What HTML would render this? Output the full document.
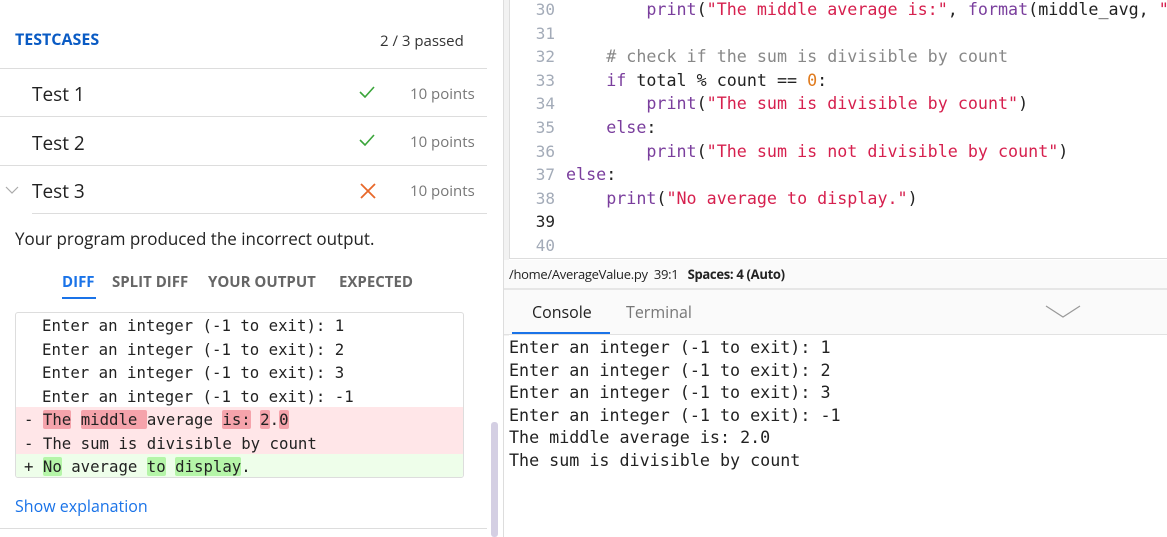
<!DOCTYPE html>
<html><head><style>
*{margin:0;padding:0;box-sizing:border-box}
body{width:1167px;height:537px;overflow:hidden;background:#fff;font-family:"Open Sans","Liberation Sans",sans-serif;position:relative;color:#222}
.a{position:absolute;white-space:pre}
.m{font-family:"DejaVu Sans Mono","Liberation Mono",monospace;font-size:15.7px}
.e{font-size:16.7px}
.hl{position:absolute;height:1px;background:#ddd}
.ln{color:#a3abb8;text-align:right;width:30px}
.k{color:#7a3e9d}.s{color:#d6204e}.c{color:#888}.n{color:#e07b1e}
.rd{background:#f5a3ab;border-radius:2px}
.gr{background:#b5f5a8;border-radius:2px}
</style></head><body>
<div class="a" style="left:15px;top:28px;font-size:16px;font-weight:bold;color:#0a5bc4">TESTCASES</div>
<div class="a" style="left:380px;top:31px;font-size:15px;color:#333">2 / 3 passed</div>
<div class="hl" style="left:0;top:68px;width:487px"></div>
<div class="a" style="left:32px;top:81px;font-size:19px">Test 1</div>
<svg class="a" style="left:359px;top:86px" width="16" height="12"><path d="M1 6L6 11L15 1" stroke="#3aa53a" fill="none" stroke-width="1.6"/></svg>
<div class="a" style="left:410px;top:84px;font-size:15px;color:#777">10 points</div>
<div class="hl" style="left:0;top:116px;width:487px"></div>
<div class="a" style="left:32px;top:130px;font-size:19px">Test 2</div>
<svg class="a" style="left:359px;top:134px" width="16" height="12"><path d="M1 6L6 11L15 1" stroke="#3aa53a" fill="none" stroke-width="1.6"/></svg>
<div class="a" style="left:410px;top:132px;font-size:15px;color:#777">10 points</div>
<div class="hl" style="left:0;top:165px;width:487px"></div>
<svg class="a" style="left:5px;top:186px" width="14" height="10"><path d="M1 1 L7 7 L13 1" stroke="#aaa" fill="none" stroke-width="1.2"/></svg>
<div class="a" style="left:32px;top:178px;font-size:19px">Test 3</div>
<svg class="a" style="left:360px;top:183px" width="16" height="16"><path d="M1 1L15 15M15 1L1 15" stroke="#e8682a" stroke-width="1.8"/></svg>
<div class="a" style="left:410px;top:181px;font-size:15px;color:#777">10 points</div>
<div class="hl" style="left:32px;top:213px;width:455px"></div>
<div class="a" style="left:15px;top:227px;font-size:17px">Your program produced the incorrect output.</div>
<div class="a" style="left:62px;top:272px;font-size:15px;font-weight:bold;color:#1a73e8">DIFF</div>
<div class="a" style="left:62px;top:297px;width:34px;height:2px;background:#1a73e8"></div>
<div class="a" style="left:112px;top:272px;font-size:15px;font-weight:bold;color:#666">SPLIT DIFF</div>
<div class="a" style="left:208px;top:272px;font-size:15px;font-weight:bold;color:#666">YOUR OUTPUT</div>
<div class="a" style="left:339px;top:272px;font-size:15px;font-weight:bold;color:#666">EXPECTED</div>
<div class="a" style="left:15px;top:312px;width:449px;height:166px;border:1px solid #ddd;border-radius:3px;overflow:hidden">
 <div class="a" style="left:0;top:94px;width:449px;height:47px;background:#ffe6e8"></div>
 <div class="a" style="left:0;top:141px;width:449px;height:24px;background:#eefeea"></div>
 <div class="a m" style="left:26px;top:1px;line-height:23.5px">Enter an integer (-1 to exit): 1
Enter an integer (-1 to exit): 2
Enter an integer (-1 to exit): 3
Enter an integer (-1 to exit): -1</div>
 <div class="a m" style="left:8px;top:95px;line-height:23.5px">- <span class="rd">The</span> <span class="rd">middle </span>average <span class="rd">is:</span> <span class="rd">2</span>.<span class="rd">0</span>
- The sum is divisible by count
+ <span class="gr">No</span> average <span class="gr">to</span> <span class="gr">display</span>.</div>
</div>
<div class="a" style="left:15px;top:495px;font-size:16px;color:#1a73e8">Show explanation</div>
<div class="hl" style="left:0;top:528px;width:487px"></div>
<div class="a" style="left:491px;top:422px;width:7px;height:115px;background:#d4cfe3;border-radius:3px"></div>
<div class="a" style="left:503px;top:0;width:6px;height:537px;background:#f2f2f2;border-left:1px solid #ddd"></div>
<div class="a" style="left:509px;top:0;width:660px;height:259px;border-left:1px solid #ddd;border-bottom:1px solid #ddd;background:#fff"></div>
<div class="a m ln" style="left:525px;top:-2px;line-height:23.6px;font-size:16px">30
31
32
33
34
35
36
37
38
<span style="color:#222">39</span>
40</div>
<div class="a m e" style="left:566px;top:-2px;line-height:23.6px;color:#222">        <span class="k">print</span>(<span class="s">"The middle average is:"</span>, <span class="k">format</span>(middle_avg, <span class="s">"</span>

    <span class="c"># check if the sum is divisible by count</span>
    <span class="k">if</span> total % count == <span class="n">0</span>:
        <span class="k">print</span>(<span class="s">"The sum is divisible by count"</span>)
    <span class="k">else</span>:
        <span class="k">print</span>(<span class="s">"The sum is not divisible by count"</span>)
<span class="k">else</span>:
    <span class="k">print</span>(<span class="s">"No average to display."</span>)</div>
<div class="a" style="left:504px;top:260px;width:663px;height:29px;background:#fafafa"></div>
<div class="a" style="left:509px;top:265px;font-size:13px;color:#222;letter-spacing:-0.3px">/home/AverageValue.py  39:1   <b>Spaces: 4 (Auto)</b></div>
<div class="a" style="left:504px;top:288px;width:663px;height:2px;background:#e6e6e6"></div>
<div class="a" style="left:504px;top:290px;width:663px;height:45px;background:#fafafa;border-bottom:1px solid #e2e2e2"></div>
<div class="a" style="left:532px;top:301px;font-size:16px;color:#222">Console</div>
<div class="a" style="left:626px;top:301px;font-size:16px;color:#777">Terminal</div>
<div class="a" style="left:512px;top:332px;width:98px;height:2px;background:#1a73e8"></div>
<svg class="a" style="left:1045px;top:305px" width="36" height="14"><path d="M1 1L18 12L35 1" stroke="#999" fill="none" stroke-width="1.2"/></svg>
<div class="a" style="left:504px;top:336px;width:663px;height:201px;background:#fff"></div>
<div class="a m e" style="left:509px;top:336px;line-height:22.6px;color:#222">Enter an integer (-1 to exit): 1
Enter an integer (-1 to exit): 2
Enter an integer (-1 to exit): 3
Enter an integer (-1 to exit): -1
The middle average is: 2.0
The sum is divisible by count</div>
</body></html>
